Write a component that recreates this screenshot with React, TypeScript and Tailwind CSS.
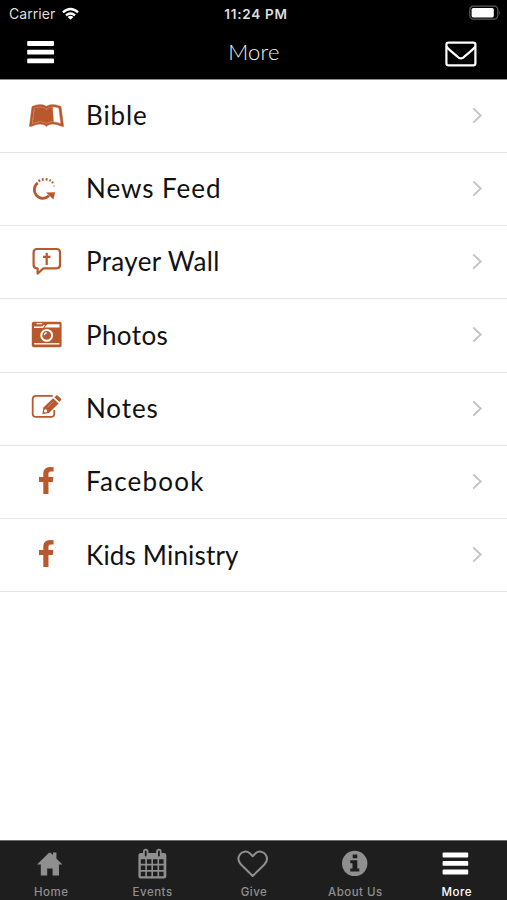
import type { ReactNode } from 'react';
import { FaLeanpub } from 'react-icons/fa';

const ink = '#b9582c';

function BibleIcon() {
  return (
    <span className="flex h-10 w-12 items-start justify-center pt-[5px]">
      <FaLeanpub className="h-[29px] w-[35px] text-[#b9582c]" preserveAspectRatio="none" stroke="currentColor" strokeWidth={9} />
    </span>
  );
}

function NewsIcon() {
  return (
    <svg className="h-10 w-12" viewBox="0 0 48 40" fill="none" stroke={ink}>
      <path d="M15.8 13.8A8.6 8.6 0 1 0 27 26.8" strokeWidth="2.7" />
      <path d="M24 23.6L33.2 23.2L31.4 30.4Z" fill={ink} stroke="none" />
      <path d="M16.8 10.7l1.1 2.2M20.4 9.3l.6 2.5M24.8 9.2l-.3 2.5" strokeWidth="1.9" />
      <path d="M28.7 10.3l-1.2 2M31.4 12.7l-1.7 1.4" strokeWidth="1.5" />
      <path d="M33 16.8l-1.8.7" strokeWidth="1.1" opacity=".6" />
    </svg>
  );
}

function PrayerIcon() {
  return (
    <svg className="h-10 w-12" viewBox="0 0 48 40" fill="none" stroke={ink} strokeLinejoin="round">
      <path d="M15 7H34.5Q38 7 38 10.5V22.8Q38 26.3 34.5 26.3H21.5L15.6 31.6V26.3H15Q11.6 26.3 11.6 22.8V10.5Q11.6 7 15 7Z" strokeWidth="2.2" />
      <path d="M24.7 10.7V23M21 14.8H28.4" strokeWidth="2.2" />
    </svg>
  );
}

function PhotosIcon() {
  return (
    <svg className="h-10 w-12" viewBox="0 0 48 40">
      <rect x="9.8" y="6.8" width="29.8" height="25.4" rx="2" fill={ink} />
      <path d="M25.4 9.3H37.5V12.4H22.5Z" fill="#fff" />
      <path d="M12 12.2H20.6L22.4 10.2" fill="none" stroke="#fff" strokeWidth="1.4" />
      <path d="M14.6 8.6H20.2" stroke="#fff" strokeWidth="1.3" />
      <path d="M12.2 28.8H37.4" stroke="#fff" strokeWidth="1.4" />
      <circle cx="24.7" cy="20.4" r="5.4" fill={ink} stroke="#fff" strokeWidth="2" />
      <path d="M22.4 20.2A2.4 2.4 0 0 1 24.8 17.9" fill="none" stroke="#fff" strokeWidth="1.2" />
    </svg>
  );
}

function NotesIcon() {
  return (
    <svg className="h-10 w-12" viewBox="0 0 48 40" fill="none" stroke={ink}>
      <path d="M30 6.9H14.2Q10.7 6.9 10.7 10.4V24.4Q10.7 27.9 14.2 27.9H28.8Q32.3 27.9 32.3 24.4V21.6" strokeWidth="1.8" strokeLinecap="round" />
      <path d="M20.3 25.2L21.4 18.6L31.1 9.2L36.6 14.6L26.9 24Z" fill={ink} stroke="none" />
      <path d="M32.4 8.2L34.3 6.5Q35 5.9 35.7 6.5L39 9.7Q39.6 10.4 39 11.1L37.4 12.9Z" fill={ink} stroke="none" />
      <path d="M25.6 18.2L31.4 12.6" stroke="#fff" strokeWidth=".6" opacity=".5" />
      <circle cx="23.6" cy="21.9" r="1.6" fill="#fff" stroke="none" />
    </svg>
  );
}

function FacebookIcon() {
  return (
    <span className="flex h-10 w-12 justify-center pt-[4.5px] pl-[0.5px]">
      <svg className="h-[27.4px] w-[14.6px]" viewBox="479 0 864 1664" fill={ink} preserveAspectRatio="none">
        <path d="M1343 12v264h-157q-86 0-116 36t-30 108v189h293l-39 296h-254v759h-306v-759h-255v-296h255v-218q0-186 104-288.5t277-102.5q147 0 228 12z" />
      </svg>
    </span>
  );
}

function Chevron() {
  return (
    <svg className="mt-3 h-4 w-3" viewBox="0 0 12 16" fill="none" stroke="#c3c3c3" strokeWidth="1.9">
      <path d="M2.2 .4L9.7 7.5L2.2 14.6" />
    </svg>
  );
}

const rows: { label: string; icon: ReactNode; height: string; text: string }[] = [
  { label: 'Bible', icon: <BibleIcon />, height: 'h-[73px]', text: 'leading-[38px] tracking-[0.9px]' },
  { label: 'News Feed', icon: <NewsIcon />, height: 'h-[73px]', text: 'leading-[38px] tracking-[0.95px]' },
  { label: 'Prayer Wall', icon: <PrayerIcon />, height: 'h-[73px]', text: 'leading-[38px] tracking-[0.35px]' },
  { label: 'Photos', icon: <PhotosIcon />, height: 'h-[74px]', text: 'leading-10 tracking-[0.4px]' },
  { label: 'Notes', icon: <NotesIcon />, height: 'h-[73px]', text: 'leading-[38px] tracking-[0.9px]' },
  { label: 'Facebook', icon: <FacebookIcon />, height: 'h-[73px]', text: 'leading-[38px] tracking-[1.2px]' },
  { label: 'Kids Ministry', icon: <FacebookIcon />, height: 'h-[73px]', text: 'leading-10 tracking-[0.18px]' },
];

function TabSvg({ children }: { children: ReactNode }) {
  return (
    <svg className="h-9 w-10" viewBox="0 0 40 36" fill="currentColor">
      {children}
    </svg>
  );
}

const tabs: { label: string; active?: boolean; icon: ReactNode }[] = [
  {
    label: 'Home',
    icon: <path d="M6 18.4L17.8 7Q18.8 6 19.8 7L22 9.1V6.6H25.4V12.4L31.4 18.4H28V29.6H21.6V22.4H16.2V29.6H9.8V18.4Z" />,
  },
  {
    label: 'Events',
    icon: (
      <>
        <path d="M8.5 7H32Q34.3 7 34.3 9.3V30.2Q34.3 32.5 32 32.5H8.7Q6.4 32.5 6.4 30.2V9.3Q6.4 7 8.7 7Z" />
        <rect x="11" y="2.8" width="5.4" height="9.2" rx="2.7" />
        <rect x="24.2" y="2.8" width="5.4" height="9.2" rx="2.7" />
        <path d="M13.7 5.4V9.6M26.9 5.4V9.6" stroke="#1e1e1e" strokeWidth="1.8" strokeLinecap="round" />
        <path d="M8.8 15.5H32.2M8.8 21.8H32.2M8.8 28H32.2" stroke="#1e1e1e" strokeWidth="4.4" strokeDasharray="4.5 1.6" />
      </>
    ),
  },
  {
    label: 'Give',
    icon: <path d="M19.7 30L8 18.5C5.3 15.6 4.8 11.8 6.7 8.8C8.7 5.2 13.7 4.6 16.8 7.3L19.7 10.2L22.6 7.3C25.7 4.6 30.7 5.2 32.7 8.8C34.6 11.8 34.1 15.6 31.4 18.5Z" fill="none" stroke="currentColor" strokeWidth="2" strokeLinejoin="round" />,
  },
  {
    label: 'About Us',
    icon: (
      <>
        <circle cx="19.7" cy="17.4" r="12.7" />
        <path d="M17.7 8.6H22.3V12.2H17.7ZM15.3 14.2H22.3V22.4H24.3V25.6H15.3V22.4H17.5V17.2H15.3Z" fill="#1e1e1e" />
      </>
    ),
  },
  {
    label: 'More',
    active: true,
    icon: (
      <>
        <rect x="6.6" y="6.6" width="25.6" height="4.9" rx=".9" />
        <rect x="6.6" y="15" width="25.6" height="4.8" rx=".9" />
        <rect x="6.6" y="23.5" width="25.6" height="4.9" rx=".9" />
      </>
    ),
  },
];

export default function App() {
  return (
    <div className="flex h-[900px] w-[507px] flex-col overflow-hidden bg-white font-['Lato','Open_Sans',sans-serif]">
      <header className="h-20 border-b border-[#8e8e8e] bg-black">
        <div className="grid h-7 grid-cols-3 items-start pl-[9px] pr-[6px] font-['Inter',sans-serif] text-[#dedede]">
          <div className="flex items-center gap-[7px]">
            <span className="text-[14px] leading-7 tracking-[0.05px]">Carrier</span>
            <svg className="h-[14px] w-[17px]" viewBox="0 0 18 14" fill="none" stroke="#fff" strokeWidth="2.5">
              <path d="M1 5.2Q9-2 17 5.2" />
              <path d="M4.2 8.5Q9 4.6 13.8 8.5" />
              <path d="M5.9 10.1Q9 7.8 12.1 10.1L9 13.2Z" fill="#fff" stroke="none" />
            </svg>
          </div>
          <div className="whitespace-nowrap pl-[2px] text-center text-[13.5px] font-semibold leading-7 tracking-[0.75px]">11:24 PM</div>
          <svg className="mt-[5px] h-4 w-8 justify-self-end" viewBox="0 0 32 16">
            <rect x=".8" y="1.2" width="28" height="13" rx="3.6" fill="none" stroke="#5c5c5c" strokeWidth="1.2" />
            <rect x="2.6" y="3" width="22.2" height="9.4" rx="1.6" fill="#fff" />
            <path d="M30.3 5.6Q32 7.7 30.3 9.8Z" fill="#5c5c5c" />
          </svg>
        </div>
        <div className="grid h-[51px] grid-cols-3 pl-[27px] pr-[30px]">
          <svg className="mt-3 h-6 w-7" viewBox="0 0 28 24" fill="#fff">
            <rect x=".2" y="1" width="26.8" height="4.9" rx=".9" />
            <rect x=".2" y="9.7" width="26.8" height="4.9" rx=".9" />
            <rect x=".2" y="18.4" width="26.8" height="4.9" rx=".9" />
          </svg>
          <h1 className="pl-[4px] pt-2 text-center text-[22px] font-light leading-8 tracking-[0.3px] text-[#f4f4f4]">More</h1>
          <svg className="mt-[13px] h-[26px] w-8 justify-self-end" viewBox="0 0 32 26" fill="none" stroke="#fff" strokeWidth="2.2" strokeLinejoin="round">
            <rect x="1.4" y="1.6" width="29" height="22.8" rx="2.2" />
            <path d="M1.6 5.8Q4 8.8 12.2 15.4Q15.9 19.2 19.6 15.4Q27.8 8.8 30.2 5.8" />
          </svg>
        </div>
      </header>

      <main className="flex-1">
        <ul>
          {rows.map((row) => (
            <li key={row.label} className={`flex items-start border-b border-[#e6e6e6] pl-[22px] pr-6 pt-4 ${row.height}`}>
              {row.icon}
              <span className={`ml-4 flex-1 text-[26px] text-[#111] ${row.text}`}>{row.label}</span>
              <Chevron />
            </li>
          ))}
        </ul>
      </main>

      <nav className="grid h-[60px] grid-cols-5 border-t border-[#6b6b6b] bg-[#1e1e1e] font-['Inter',sans-serif]">
        {tabs.map((tab) => (
          <div key={tab.label} className={`flex flex-col items-center pt-[5px] ${tab.active ? 'text-white' : 'text-[#8f8f8f]'}`}>
            <TabSvg>{tab.icon}</TabSvg>
            <span className="mt-[2px] pl-px text-[11.5px] font-medium leading-4 tracking-[0.5px]">{tab.label}</span>
          </div>
        ))}
      </nav>
    </div>
  );
}
